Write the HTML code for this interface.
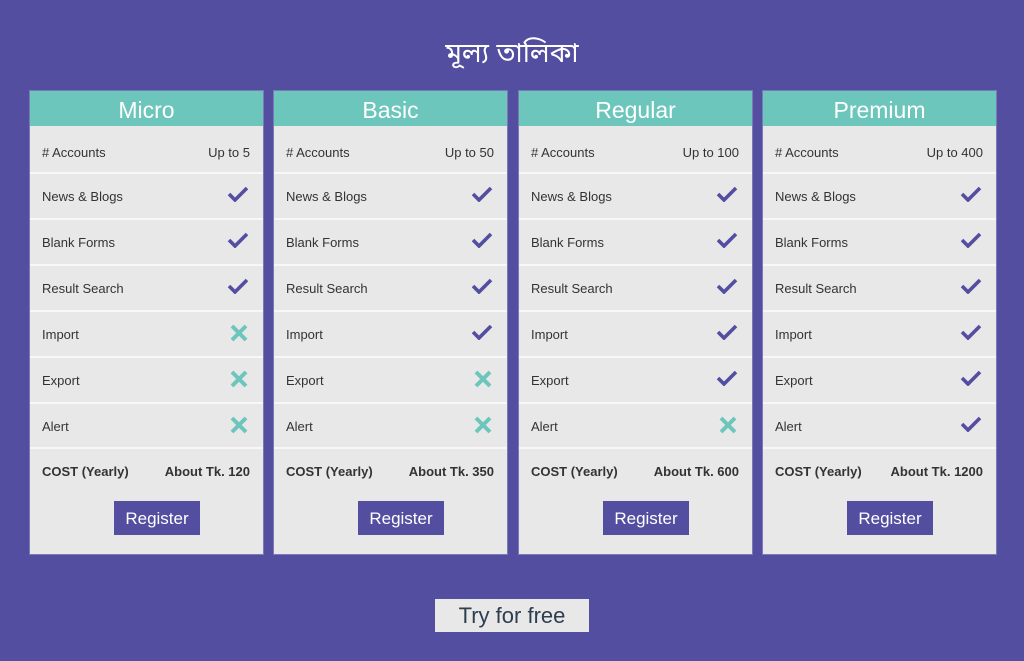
<!DOCTYPE html><html><head><meta charset="utf-8"><style>
body{margin:0;width:1024px;height:661px;background:#534ea0;font-family:"Liberation Sans",sans-serif;position:relative;overflow:hidden}
.t{position:absolute;left:0;width:1024px;top:38px;text-align:center;color:#fff;font-size:27px;font-family:"Liberation Sans","Noto Sans Bengali","Lohit Bengali",sans-serif}
.c{position:absolute;top:91px;width:233px;height:463px;background:#e8e8e8;outline:1px solid #7c79b8}
.h{height:35px;background:#6cc6bc;color:#fff;text-align:center;font-size:23px;line-height:38px}
.r{position:absolute;left:0;right:0;height:46px;border-top:2px solid #f7f7f7;font-size:13px;color:#333}
.r span{position:absolute;left:12px;top:0;line-height:46px}
.r b{position:absolute;right:13px;top:0;line-height:46px;font-weight:normal}
.r svg{position:absolute;right:14px;top:12px}
.cost b,.cost span{font-weight:bold;color:#333}
.btn{position:absolute;left:84px;top:410px;width:86px;height:34px;background:#534ea0;color:#fff;font-size:17px;text-align:center;line-height:35px}
.free{position:absolute;left:435px;top:599px;width:154px;height:33px;background:#e8e8e8;color:#2d3e50;font-size:22px;text-align:center;line-height:34px}
</style></head><body>
<div class="t">মূল্য তালিকা</div>
<svg width="0" height="0" style="position:absolute"><defs>
<symbol id="ck" viewBox="0 0 22 16"><path d="M2 8 L8 14 L20 2" fill="none" stroke="#534ea0" stroke-width="3.6"/></symbol>
<symbol id="x" viewBox="0 0 20 20"><path d="M3 3 L17 17 M17 3 L3 17" fill="none" stroke="#6cc6bc" stroke-width="4"/></symbol>
</defs></svg>
<div id="cards"></div>
<div class="free">Try for free</div>
<script>
var plans=[["Micro",30,"Up to 5","120",[1,1,1,0,0,0]],["Basic",274,"Up to 50","350",[1,1,1,1,0,0]],["Regular",519,"Up to 100","600",[1,1,1,1,1,0]],["Premium",763,"Up to 400","1200",[1,1,1,1,1,1]]];
var feats=["News & Blogs","Blank Forms","Result Search","Import","Export","Alert"];
var tops=[35,81,127,173,219,265,311,357];
var h="";
plans.forEach(function(p){
 h+='<div class="c" style="left:'+p[1]+'px"><div class="h">'+p[0]+'</div>';
 h+='<div class="r" style="top:39px;border-top:none"><span>&#35; Accounts</span><b>'+p[2]+'</b></div>';
 feats.forEach(function(f,i){
  var t=tops[i+1];
  var ic=p[4][i]?'<svg width="22" height="16"><use href="#ck"/></svg>':'<svg width="20" height="20" style="top:11px"><use href="#x"/></svg>';
  h+='<div class="r" style="top:'+t+'px"><span>'+f.replace("&","&amp;")+'</span>'+ic+'</div>';
 });
 h+='<div class="r cost" style="top:356px"><span>COST (Yearly)</span><b>About Tk. '+p[3]+'</b></div>';
 h+='<div class="btn">Register</div></div>';
});
document.getElementById("cards").innerHTML=h;
</script>
</body></html>
